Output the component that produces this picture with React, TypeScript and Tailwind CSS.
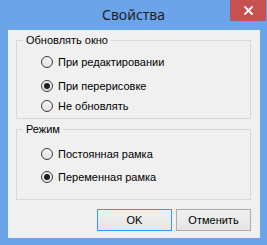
import React from "react";

function Radio({ label, checked, className = "" }: { label: string; checked?: boolean; className?: string }) {
  return (
    <div className={`flex items-center h-[20px] pl-[24px] ${className}`}>
      <div className="w-[12px] h-[12px] rounded-full border border-[#3c3c3c] bg-linear-to-b from-[#f4f4f4] to-[#e2e2e2] flex items-center justify-center shrink-0">
        {checked && <div className="w-[6px] h-[6px] rounded-full bg-[#1e1e1e]" />}
      </div>
      <span className="ml-[5px] text-[11px] leading-[13px] text-black">{label}</span>
    </div>
  );
}

export default function App() {
  return (
    <div
      className="w-[267px] h-[245px] bg-[#6ba4e8] flex flex-col relative"
      style={{ fontFamily: '"Liberation Sans", Arial, sans-serif' }}
    >
      <div className="h-[30px] flex items-center justify-center shrink-0">
        <span
          className="text-[14px] leading-[18px] text-[#1f1f1f] pb-[1px]"
          style={{ fontFamily: '"Noto Sans", "Open Sans", sans-serif' }}
        >
          Свойства
        </span>
      </div>
      <div className="absolute top-0 right-[1px] w-[36px] h-[21px] bg-[#c75050] flex items-center justify-center">
        <svg width="9" height="9" viewBox="0 0 9 9">
          <path d="M1 1 L8 8 M8 1 L1 8" stroke="white" strokeWidth="1.8" strokeLinecap="square" />
        </svg>
      </div>
      <div className="flex-1 ml-[8px] mr-[7px] mb-[7px] bg-[#f0f0f0] pl-[8px] pr-[9px] flex flex-col">
        <fieldset className="mt-[4px] border border-[#d8d8d8] pb-[2px]">
          <legend className="ml-[6px] px-[3px] text-[11px] leading-[13px] text-black">Обновлять окно</legend>
          <Radio label="При редактировании" className="mt-[5px]" />
          <Radio label="При перерисовке" checked className="mt-[4px]" />
          <Radio label="Не обновлять" />
        </fieldset>
        <fieldset className="mt-[4px] border border-[#d8d8d8] pb-[12px]">
          <legend className="ml-[6px] px-[3px] text-[11px] leading-[13px] text-black">Режим</legend>
          <Radio label="Постоянная рамка" className="mt-[8px]" />
          <Radio label="Переменная рамка" checked className="mt-[3px]" />
        </fieldset>
        <div className="flex justify-end gap-[4px] mt-[9px]">
          <button className="w-[75px] h-[22px] border border-[#3399ff] bg-linear-to-b from-[#f0f0f0] to-[#e5e5e5] text-[11px] text-black">
            OK
          </button>
          <button className="w-[75px] h-[22px] border border-[#acacac] bg-linear-to-b from-[#f0f0f0] to-[#e5e5e5] text-[11px] text-black">
            Отменить
          </button>
        </div>
      </div>
    </div>
  );
}
